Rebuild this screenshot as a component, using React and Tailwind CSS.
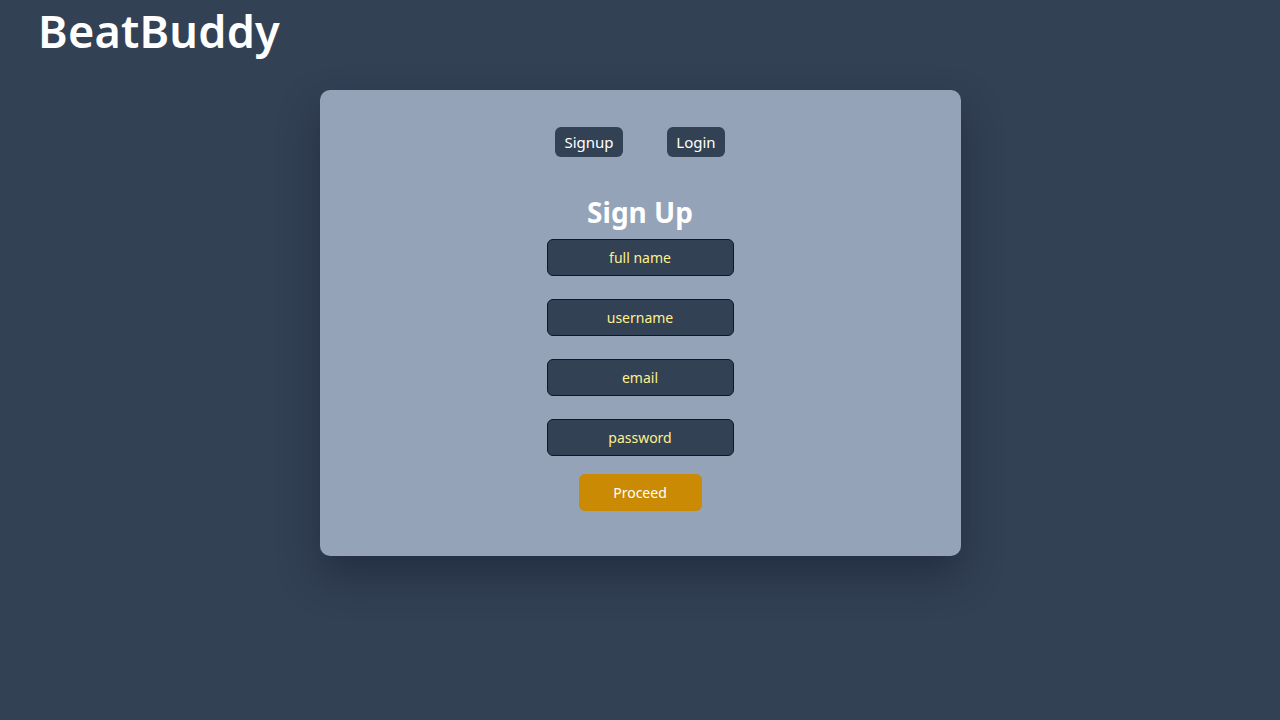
export default function App() {
  const fields = ["full name", "username", "email", "password"];
  return (
    <div
      className="min-h-[720px] w-full bg-[#334155] text-white"
      style={{ fontFamily: '"Noto Sans", "Open Sans", sans-serif' }}
    >
      <header className="h-[90px] pl-[38px] pt-[3px]">
        <h1 className="text-[45px] font-semibold leading-[56px] tracking-[0.005em]">BeatBuddy</h1>
      </header>
      <div className="mx-auto flex h-[466px] w-[641px] flex-col items-center rounded-[10px] bg-[#94a3b8] pt-[37px] shadow-[0_20px_40px_rgba(15,23,42,0.45)]">
        <div className="flex gap-[44px]">
          <button className="h-[30px] w-[68px] rounded-md bg-[#334155] text-[15px] text-white">Signup</button>
          <button className="h-[30px] w-[58px] rounded-md bg-[#334155] text-[15px] text-white">Login</button>
        </div>
        <h2 className="mt-[37px] text-[28px] font-bold leading-[36px] text-white">Sign Up</h2>
        <div className="mt-[9px] flex flex-col gap-[23px]">
          {fields.map((f) => (
            <input
              key={f}
              placeholder={f}
              className="h-[37px] w-[187px] rounded-md border border-[#111827] bg-[#334155] text-center text-[14px] text-[#fef08a] placeholder:text-[#fef08a] outline-none"
            />
          ))}
        </div>
        <button className="mt-[18px] h-[37px] w-[123px] rounded-md bg-[#ca8a04] text-[14px] text-white">Proceed</button>
      </div>
    </div>
  );
}
